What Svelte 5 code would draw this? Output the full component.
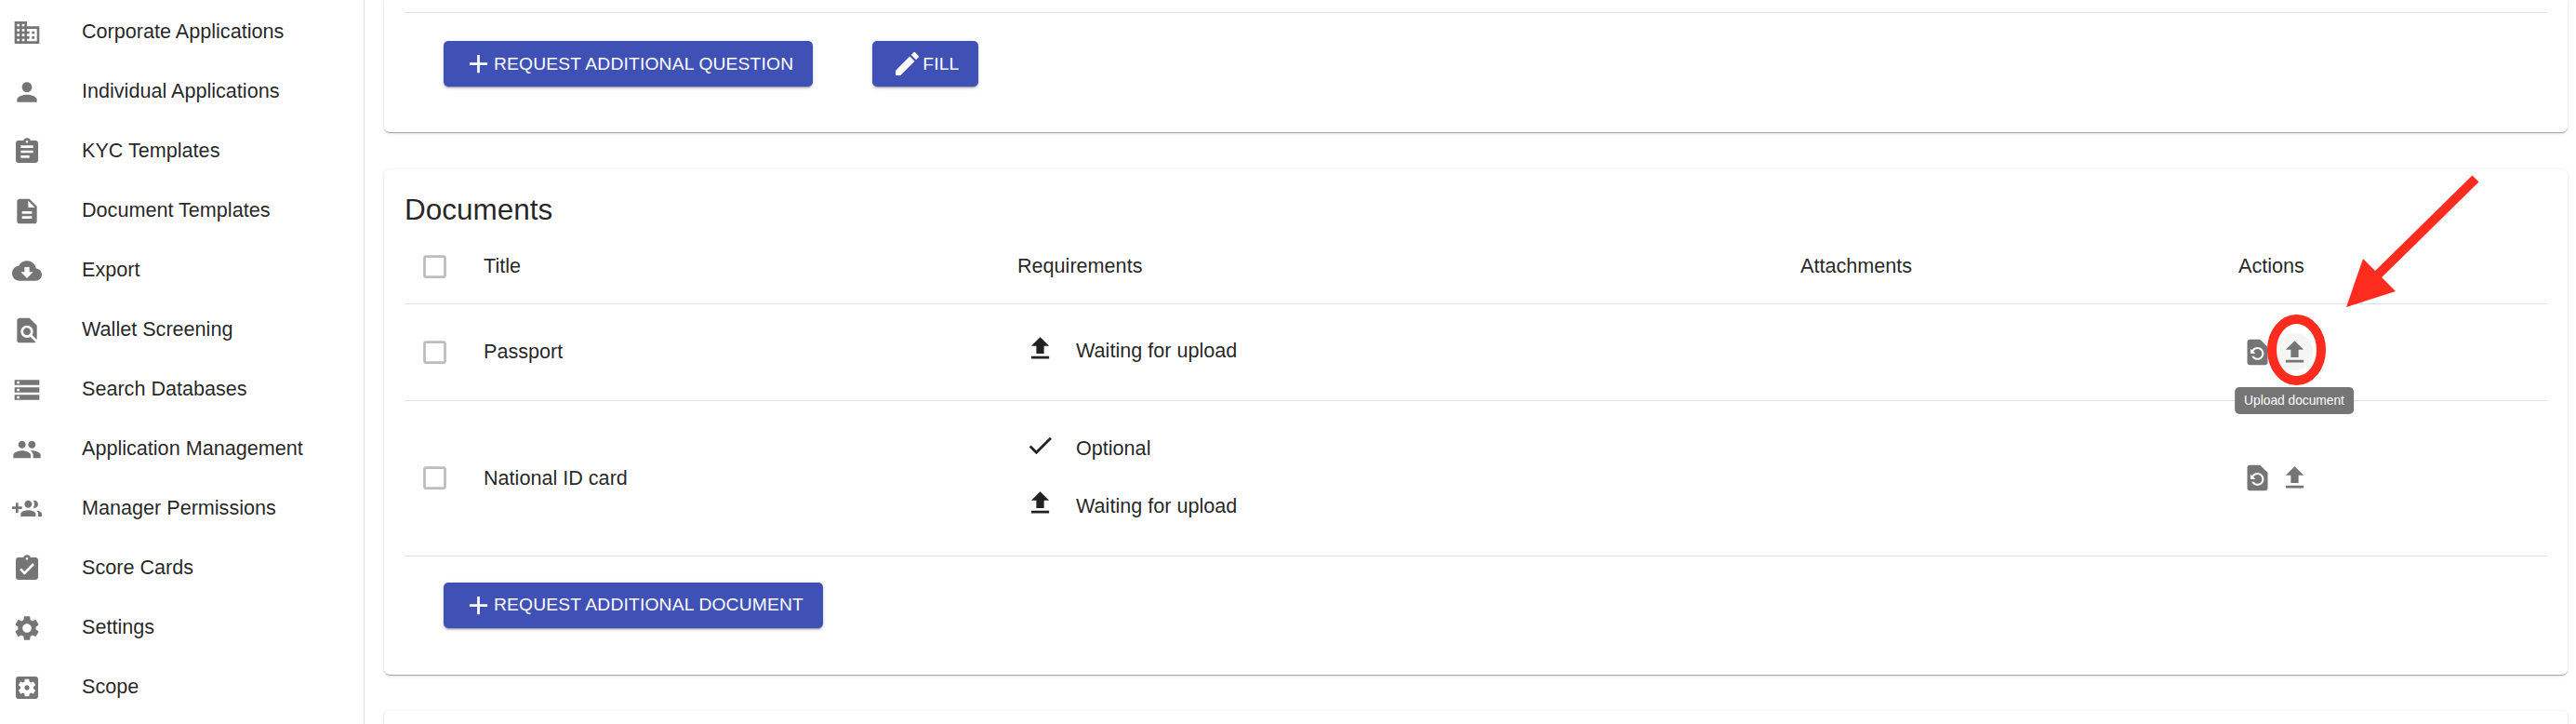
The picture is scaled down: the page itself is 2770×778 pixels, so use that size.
<script>
  const icons = {
    domain: 'M12 7V3H2v18h20V7H12zM6 19H4v-2h2v2zm0-4H4v-2h2v2zm0-4H4V9h2v2zm0-4H4V5h2v2zm4 12H8v-2h2v2zm0-4H8v-2h2v2zm0-4H8V9h2v2zm0-4H8V5h2v2zm10 12h-8v-2h2v-2h-2v-2h2v-2h-2V9h8v10zm-2-8h-2v2h2v-2zm0 4h-2v2h2v-2z',
    person: 'M12 12c2.21 0 4-1.79 4-4s-1.79-4-4-4-4 1.79-4 4 1.79 4 4 4zm0 2c-2.67 0-8 1.34-8 4v2h16v-2c0-2.66-5.33-4-8-4z',
    assignment: 'M19 3h-4.18C14.4 1.84 13.3 1 12 1c-1.3 0-2.4.84-2.82 2H5c-1.1 0-2 .9-2 2v14c0 1.1.9 2 2 2h14c1.1 0 2-.9 2-2V5c0-1.1-.9-2-2-2zm-7 0c.55 0 1 .45 1 1s-.45 1-1 1-1-.45-1-1 .45-1 1-1zm2 14H7v-2h7v2zm3-4H7v-2h10v2zm0-4H7V7h10v2z',
    description: 'M14 2H6c-1.1 0-1.99.9-1.99 2L4 20c0 1.1.89 2 1.99 2H18c1.1 0 2-.9 2-2V8l-6-6zm2 16H8v-2h8v2zm0-4H8v-2h8v2zm-3-5V3.5L18.5 9H13z',
    cloud: 'M19.35 10.04C18.67 6.59 15.64 4 12 4 9.11 4 6.6 5.64 5.35 8.04 2.34 8.36 0 10.91 0 14c0 3.31 2.69 6 6 6h13c2.76 0 5-2.24 5-5 0-2.64-2.05-4.78-4.65-4.96zM17 13l-5 5-5-5h3V9h4v4h3z',
    find: 'M20 19.59V8l-6-6H6c-1.1 0-1.99.9-1.99 2L4 20c0 1.1.89 2 1.99 2H18c.45 0 .85-.15 1.19-.4l-4.43-4.43c-.8.52-1.74.83-2.76.83-2.76 0-5-2.24-5-5s2.24-5 5-5 5 2.24 5 5c0 1.02-.31 1.96-.83 2.75L20 19.59zM9 13c0 1.66 1.34 3 3 3s3-1.34 3-3-1.34-3-3-3-3 1.34-3 3z',
    storage: 'M2 20h20v-4H2v4zm2-3h2v2H4v-2zM2 4v4h20V4H2zm4 3H4V5h2v2zm-4 7h20v-4H2v4zm2-3h2v2H4v-2z',
    people: 'M16 11c1.66 0 2.99-1.34 2.99-3S17.66 5 16 5c-1.66 0-3 1.34-3 3s1.34 3 3 3zm-8 0c1.66 0 2.99-1.34 2.99-3S9.66 5 8 5C6.34 5 5 6.34 5 8s1.34 3 3 3zm0 2c-2.33 0-7 1.17-7 3.5V19h14v-2.5c0-2.33-4.67-3.5-7-3.5zm8 0c-.29 0-.62.02-.97.05 1.16.84 1.97 1.97 1.97 3.45V19h6v-2.5c0-2.33-4.67-3.5-7-3.5z',
    groupAdd: 'M8 10H5V7H3v3H0v2h3v3h2v-3h3v-2zm10 1c1.66 0 2.99-1.34 2.99-3S19.66 5 18 5c-.32 0-.63.05-.91.14.57.81.9 1.79.9 2.86s-.34 2.04-.9 2.86c.28.09.59.14.91.14zm-5 0c1.66 0 2.99-1.34 2.99-3S14.66 5 13 5c-1.66 0-3 1.34-3 3s1.34 3 3 3zm6.62 2.16c.83.73 1.38 1.66 1.38 2.84v2h3v-2c0-1.54-2.37-2.49-4.38-2.84zM13 13c-2 0-6 1-6 3v2h12v-2c0-2-4-3-6-3z',
    turnedIn: 'M19 3h-4.18C14.4 1.84 13.3 1 12 1c-1.3 0-2.4.84-2.82 2H5c-1.1 0-2 .9-2 2v14c0 1.1.9 2 2 2h14c1.1 0 2-.9 2-2V5c0-1.1-.9-2-2-2zm-7 0c.55 0 1 .45 1 1s-.45 1-1 1-1-.45-1-1 .45-1 1-1zm-2 14l-4-4 1.41-1.41L10 14.17l6.59-6.59L18 9l-8 8z',
    settings: 'M19.14 12.94c.04-.3.06-.61.06-.94 0-.32-.02-.64-.07-.94l2.03-1.58c.18-.14.23-.41.12-.61l-1.92-3.32c-.12-.22-.37-.29-.59-.22l-2.39.96c-.5-.38-1.03-.7-1.62-.94l-.36-2.54c-.04-.24-.24-.41-.48-.41h-3.84c-.24 0-.43.17-.47.41l-.36 2.54c-.59.24-1.13.57-1.62.94l-2.39-.96c-.22-.08-.47 0-.59.22L2.74 8.87c-.12.21-.08.47.12.61l2.03 1.58c-.05.3-.09.63-.09.94s.02.64.07.94l-2.03 1.58c-.18.14-.23.41-.12.61l1.92 3.32c.12.22.37.29.59.22l2.39-.96c.5.38 1.03.7 1.62.94l.36 2.54c.05.24.24.41.48.41h3.84c.24 0 .44-.17.47-.41l.36-2.54c.59-.24 1.13-.56 1.62-.94l2.39.96c.22.08.47 0 .59-.22l1.92-3.32c.12-.22.07-.47-.12-.61l-2.01-1.58zM12 15.6c-1.98 0-3.6-1.62-3.6-3.6s1.62-3.6 3.6-3.6 3.6 1.62 3.6 3.6-1.62 3.6-3.6 3.6z',
    scope: 'M12 10c-1.1 0-2 .9-2 2s.9 2 2 2 2-.9 2-2-.9-2-2-2zm7-7H5c-1.1 0-2 .9-2 2v14c0 1.1.9 2 2 2h14c1.1 0 2-.9 2-2V5c0-1.1-.9-2-2-2zm-1.75 9c0 .23-.02.46-.05.68l1.48 1.16c.13.11.17.3.08.45l-1.4 2.42c-.09.15-.27.21-.43.15l-1.74-.7c-.36.28-.76.51-1.18.69l-.26 1.85c-.03.17-.18.3-.35.3h-2.8c-.17 0-.32-.13-.35-.29l-.26-1.85c-.43-.18-.82-.41-1.18-.69l-1.74.7c-.16.06-.34 0-.43-.15l-1.4-2.42c-.09-.15-.05-.34.08-.45l1.48-1.16c-.03-.23-.05-.46-.05-.69 0-.23.02-.46.05-.68l-1.48-1.16c-.13-.11-.17-.3-.08-.45l1.4-2.42c.09-.15.27-.21.43-.15l1.74.7c.36-.28.76-.51 1.18-.69l.26-1.85c.03-.17.18-.3.35-.3h2.8c.17 0 .32.13.35.29l.26 1.85c.43.18.82.41 1.18.69l1.74-.7c.16-.06.34 0 .43.15l1.4 2.42c.09.15.05.34-.08.45l-1.48 1.16c.03.23.05.46.05.69z',
    add: 'M19 13h-6v6h-2v-6H5v-2h6V5h2v6h6v2z',
    edit: 'M3 17.25V21h3.75L17.81 9.94l-3.75-3.75L3 17.25zM20.71 7.04c.39-.39.39-1.02 0-1.41l-2.34-2.34c-.39-.39-1.02-.39-1.41 0l-1.83 1.83 3.75 3.75 1.83-1.83z',
    check: 'M9 16.17L4.83 12l-1.42 1.41L9 19 21 7l-1.41-1.41z',
    upload: 'M9 16h6v-6h4l-7-7-7 7h4zm-4 2h14v2H5z',
    restore: 'M14 2H6c-1.1 0-1.99.9-1.99 2L4 20c0 1.1.89 2 1.99 2H18c1.1 0 2-.9 2-2V8l-6-6zm-2 16c-2.05 0-3.81-1.24-4.58-3h1.71c.63.9 1.68 1.5 2.87 1.5 1.93 0 3.5-1.57 3.5-3.5S13.93 9.5 12 9.5c-1.35 0-2.52.78-3.1 1.9l1.6 1.6h-4V9l1.3 1.3C8.69 8.92 10.23 8 12 8c2.76 0 5 2.24 5 5s-2.24 5-5 5z',
    box: 'M19 5v14H5V5h14m0-2H5c-1.1 0-2 .9-2 2v14c0 1.1.9 2 2 2h14c1.1 0 2-.9 2-2V5c0-1.1-.9-2-2-2z'
  };

  const nav = [
    ['domain', 'Corporate Applications'],
    ['person', 'Individual Applications'],
    ['assignment', 'KYC Templates'],
    ['description', 'Document Templates'],
    ['cloud', 'Export'],
    ['find', 'Wallet Screening'],
    ['storage', 'Search Databases'],
    ['people', 'Application Management'],
    ['groupAdd', 'Manager Permissions'],
    ['turnedIn', 'Score Cards'],
    ['settings', 'Settings'],
    ['scope', 'Scope']
  ];

  const documents = [
    { title: 'Passport', hover: true, reqs: [['upload', 'Waiting for upload']] },
    { title: 'National ID card', hover: false, reqs: [['check', 'Optional'], ['upload', 'Waiting for upload']] }
  ];
</script>

{#snippet icon(name, cls)}
  <svg class={cls} viewBox="0 0 24 24" aria-hidden="true"><path d={icons[name]} /></svg>
{/snippet}

<div class="page">
  <nav class="sidebar">
    {#each nav as [name, label]}
      <div class="nav-item">
        {@render icon(name, 'nav-icon')}
        <span>{label}</span>
      </div>
    {/each}
  </nav>

  <main class="content">
    <section class="card first">
      <div class="card-actions">
        <button class="btn">{@render icon('add', 'btn-icon')}Request additional question</button>
        <button class="btn">{@render icon('edit', 'btn-icon')}Fill</button>
      </div>
    </section>

    <section class="card docs">
      <h2>Documents</h2>
      <table>
        <colgroup>
          <col class="c-check" /><col class="c-title" /><col class="c-req" /><col class="c-att" /><col />
        </colgroup>
        <thead>
          <tr>
            <th>{@render icon('box', 'checkbox')}</th>
            <th>Title</th>
            <th>Requirements</th>
            <th>Attachments</th>
            <th>Actions</th>
          </tr>
        </thead>
        <tbody>
          {#each documents as doc}
            <tr>
              <td>{@render icon('box', 'checkbox')}</td>
              <td>{doc.title}</td>
              <td>
                <div class="reqs">
                  {#each doc.reqs as [name, text]}
                    <div class="req">{@render icon(name, 'req-icon')}<span>{text}</span></div>
                  {/each}
                </div>
              </td>
              <td></td>
              <td>
                <div class="actions">
                  <button class="icon-btn">{@render icon('restore', 'act-icon')}</button>
                  <button class="icon-btn" class:hovered={doc.hover}>
                    {@render icon('upload', 'act-icon')}
                    {#if doc.hover}<span class="tooltip">Upload document</span>{/if}
                  </button>
                </div>
              </td>
            </tr>
          {/each}
        </tbody>
      </table>
      <div class="docs-foot">
        <button class="btn">{@render icon('add', 'btn-icon')}Request additional document</button>
      </div>
    </section>

    <section class="card next"></section>
  </main>

  <svg class="markup" viewBox="0 0 2770 778" aria-hidden="true">
    <ellipse cx="2469.5" cy="376" rx="26.5" ry="33" fill="none" stroke="#fe2c1f" stroke-width="10" />
    <line x1="2662" y1="192" x2="2550" y2="302" stroke="#fe2c1f" stroke-width="10" />
    <polygon points="2523,330 2541,278 2576,313" fill="#fe2c1f" />
  </svg>
</div>

<style>
  :global(body) {
    margin: 0;
    background: #fff;
  }

  .page {
    position: relative;
    display: flex;
    width: 2770px;
    height: 778px;
    overflow: hidden;
    font-family: "Liberation Sans", Arial, sans-serif;
    color: rgba(0, 0, 0, 0.87);
  }

  .sidebar {
    box-sizing: border-box;
    flex: none;
    width: 392px;
    padding-top: 3px;
    border-right: 1px solid #e0e0e0;
  }

  .nav-item {
    display: flex;
    align-items: center;
    height: 64px;
    padding-left: 13px;
    font-size: 21.6px;
  }

  .nav-item span {
    margin-left: 43px;
    padding-bottom: 2px;
  }

  .nav-icon {
    width: 32px;
    height: 32px;
    fill: #757575;
  }

  .content {
    flex: 1;
    min-width: 0;
    padding: 0 9px 0 21px;
  }

  .card {
    box-sizing: border-box;
    padding: 0 22px;
    background: #fff;
    border-radius: 6px;
    box-shadow: 0 2px 1px -1px rgba(0, 0, 0, 0.2), 0 1px 1px 0 rgba(0, 0, 0, 0.14), 0 1px 4px 0 rgba(0, 0, 0, 0.12);
  }

  .first {
    height: 142px;
    padding-top: 13px;
    border-radius: 0 0 6px 6px;
  }

  .card-actions {
    display: flex;
    gap: 64px;
    padding: 30px 0 0 42px;
    border-top: 1px solid #e0e0e0;
  }

  .btn {
    display: flex;
    align-items: center;
    height: 49px;
    padding: 0 21px;
    border: 0;
    border-radius: 5px;
    background: #3f51b5;
    color: #fff;
    font: inherit;
    font-size: 19.25px;
    letter-spacing: 0.17px;
    text-transform: uppercase;
    box-shadow: 0 3px 1px -2px rgba(0, 0, 0, 0.2), 0 2px 2px 0 rgba(0, 0, 0, 0.14), 0 1px 5px 0 rgba(0, 0, 0, 0.12);
  }

  .btn-icon {
    width: 33px;
    height: 33px;
    fill: #fff;
  }

  .docs {
    height: 543px;
    margin-top: 40px;
  }

  h2 {
    margin: 0;
    padding-top: 27px;
    height: 49px;
    font-size: 31.5px;
    line-height: 32px;
    font-weight: 400;
  }

  table {
    width: 100%;
    table-layout: fixed;
    border-collapse: collapse;
    font-size: 21.6px;
  }

  .c-check { width: 85px; }
  .c-title { width: 574px; }
  .c-req { width: 842px; }
  .c-att { width: 471px; }

  th, td {
    padding: 0;
    text-align: left;
    font-weight: 400;
    vertical-align: middle;
  }

  th {
    padding-bottom: 11px;
  }

  thead tr { height: 68px; }
  tbody tr:nth-child(1) { height: 104px; }
  tbody tr:nth-child(2) { height: 167px; }

  tr {
    border-bottom: 1px solid #e0e0e0;
  }

  .checkbox {
    display: block;
    width: 33px;
    height: 33px;
    margin-left: 16px;
    fill: #bdbdbd;
  }

  .reqs {
    display: flex;
    flex-direction: column;
    gap: 29px;
    padding: 0 0 8px 8px;
  }

  .req {
    display: flex;
    align-items: center;
    gap: 22px;
  }

  .req span {
    padding-top: 6px;
  }

  .req-icon {
    width: 33px;
    height: 33px;
    fill: rgba(0, 0, 0, 0.87);
  }

  .actions {
    display: flex;
  }

  .icon-btn {
    position: relative;
    display: flex;
    align-items: center;
    justify-content: center;
    width: 40px;
    height: 40px;
    padding: 0;
    border: 0;
    border-radius: 50%;
    background: none;
  }

  .hovered {
    background: #f5f5f5;
  }

  .act-icon {
    flex: none;
    width: 33px;
    height: 33px;
    fill: #757575;
  }

  .tooltip {
    position: absolute;
    top: 58px;
    left: 50%;
    transform: translateX(-50%);
    padding: 0 10px;
    height: 29px;
    line-height: 29px;
    white-space: nowrap;
    border-radius: 5px;
    background: #757575;
    color: #fff;
    font-family: "Liberation Sans", Arial, sans-serif;
    font-size: 13.75px;
  }

  .docs-foot {
    padding: 28px 0 0 42px;
  }

  .next {
    height: 60px;
    margin-top: 39px;
  }

  .markup {
    position: absolute;
    inset: 0;
    width: 2770px;
    height: 778px;
    pointer-events: none;
  }
</style>
